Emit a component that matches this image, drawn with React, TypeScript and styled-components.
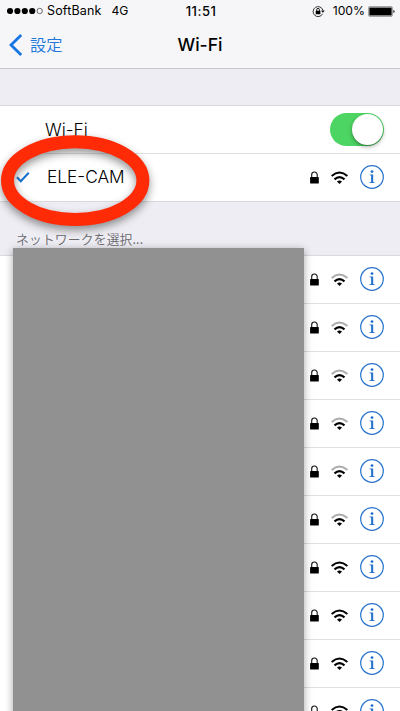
import React from "react";
import styled, { createGlobalStyle } from "styled-components";

const GlobalStyle = createGlobalStyle`
  * { box-sizing: border-box; }
  html, body { margin: 0; background: #efeff4; }
  body { font-family: Inter, "Noto Sans CJK JP", sans-serif; color: #000; overflow: hidden; }
  svg { display: block; }
`;

const Screen = styled.main`
  position: relative;
  width: 400px;
  height: 711px;
  overflow: hidden;
  background: #eeedf3;
`;

const Header = styled.header`
  height: 69px;
  background: #f6f6f8;
  border-bottom: 1px solid #c8c7cc;
`;

const StatusBar = styled.div`
  display: grid;
  grid-template-columns: 1fr auto 1fr;
  align-items: center;
  height: 22px;
  padding: 0 5px 0 7px;
  font-size: 12.2px;
  line-height: 22px;
`;

const StatusSide = styled.div<{ $end?: boolean }>`
  display: flex;
  align-items: center;
  justify-content: ${(p) => (p.$end ? "flex-end" : "flex-start")};
`;

const Carrier = styled.span`
  margin-left: 4px;
  font-size: 12.5px;
  letter-spacing: 0.15px;
`;

const NetworkType = styled.span`
  margin-left: 10px;
`;

const Clock = styled.span`
  font-weight: 500;
  font-size: 13px;
  letter-spacing: 0.5px;
`;

const Percent = styled.span`
  margin: 0 3px 0 8px;
`;

const NavBar = styled.div`
  display: grid;
  grid-template-columns: 1fr auto 1fr;
  align-items: center;
  height: 46px;
  padding: 0 9px;
`;

const BackLink = styled.a`
  display: flex;
  align-items: center;
  gap: 7px;
  color: #2077dc;
  font: 350 16.2px/24px "Noto Sans CJK JP", sans-serif;
`;

const BackText = styled.span`
  margin-top: -2px;
`;

const Title = styled.h1`
  margin: 0;
  font-size: 17.6px;
  font-weight: 500;
  line-height: 24px;
  letter-spacing: 0;
`;

const Group = styled.section`
  margin-top: 36px;
  border-top: 1px solid #d9d9de;
  border-bottom: 1px solid #d9d9de;
`;

const Row = styled.div<{ $inset?: boolean }>`
  display: flex;
  align-items: center;
  height: 47.5px;
  padding: 0 16px;
  background: ${(p) =>
    p.$inset
      ? "linear-gradient(#e0dfe3, #e0dfe3) 45px 100% / 100% 1px no-repeat, #fff"
      : "#fff"};
`;

const CheckSlot = styled.span`
  width: 31px;
`;

const RowLabel = styled.span<{ $indent?: number }>`
  flex: 1;
  margin-left: ${(p) => p.$indent ?? 0}px;
  font-size: 17.3px;
  font-weight: 350;
  line-height: 24px;
`;

const Switch = styled.span`
  display: flex;
  justify-content: flex-end;
  width: 54px;
  height: 33px;
  padding: 1px;
  border-radius: 17px;
  background: #4cd562;
`;

const Knob = styled.span`
  width: 31px;
  height: 31px;
  border-radius: 50%;
  background: #fff;
  box-shadow: 0 2px 4px rgba(0, 0, 0, 0.3), 0 1px 1px rgba(0, 0, 0, 0.2);
`;

const Accessories = styled.span`
  display: grid;
  grid-template-columns: 9px 17px 24px;
  column-gap: 12px;
  align-items: center;
`;

const ListHeading = styled.h2`
  height: 53px;
  margin: 0;
  padding: 27px 16px 0;
  color: #69696e;
  font: 350 12.8px/20px "Noto Sans CJK JP", sans-serif;
  letter-spacing: 0.15px;
`;

const NetworkList = styled.div`
  border-top: 1px solid #d9d9de;
  background: #fff;
`;

const NetworkRow = styled.div`
  display: flex;
  align-items: center;
  justify-content: flex-end;
  height: 47.97px;
  margin-left: 45px;
  padding: 0 16px 0 0;
  border-bottom: 1px solid #e0dfe3;
`;

const Mask = styled.div`
  position: absolute;
  top: 248px;
  left: 13px;
  width: 291px;
  height: 480px;
  background: #919191;
  box-shadow: 0 2px 8px rgba(0, 0, 0, 0.36);
`;

const Highlight = styled.svg`
  position: absolute;
  top: 130px;
  left: -5px;
  filter: drop-shadow(0 4px 4px rgba(0, 0, 0, 0.42));
`;

const SignalDots = () => (
  <svg width="36" height="8" viewBox="0 0 36 8">
    {[3, 10.4, 17.8, 25.2].map((x) => (
      <circle key={x} cx={x} cy="4" r="3.1" />
    ))}
    <circle cx="32.7" cy="4" r="2.7" fill="none" stroke="#333" strokeWidth=".7" />
  </svg>
);

const RotationLock = () => (
  <svg width="13" height="13" viewBox="0 0 13 13">
    <path d="M10.6 8.8A5 5 0 1 1 10.9 5.2" fill="none" stroke="#222" strokeWidth=".9" />
    <path d="M9 5.5h3.7l-1.8 2.3z" />
    <rect x="3.7" y="5.8" width="4.7" height="3.4" rx=".3" />
    <path d="M4.7 6V4.7a1.35 1.35 0 0 1 2.7 0V6" fill="none" stroke="#000" strokeWidth=".9" />
  </svg>
);

const Battery = () => (
  <svg width="27" height="11" viewBox="0 0 27 11">
    <rect x=".5" y=".5" width="24" height="10" rx="1.4" fill="#aaa" stroke="#999" strokeWidth=".8" />
    <rect x="1.5" y="1.7" width="22" height="7.6" rx=".4" />
    <path d="M25.3 4q1.3.2 1.3 1.5T25.3 7z" fill="#222" />
  </svg>
);

const BackArrow = () => (
  <svg width="14" height="22" viewBox="0 0 14 22">
    <path d="M12.2 1L2 11l10.2 10" fill="none" stroke="#1775e3" strokeWidth="2.8" />
  </svg>
);

const Check = () => (
  <svg width="14" height="12" viewBox="0 0 14 12">
    <path d="M1 6.3l3.8 4L12.7 1.7" fill="none" stroke="#1473d2" strokeWidth="2" />
  </svg>
);

const Lock = () => (
  <svg width="9" height="13" viewBox="0 0 9 13">
    <rect x=".1" y="6" width="8.7" height="6.5" rx=".5" />
    <path d="M1.7 6.5V3.8a2.75 2.75 0 0 1 5.5 0v2.7" fill="none" stroke="#111" strokeWidth="1.1" />
  </svg>
);

const WifiIcon = ({ weak }: { weak?: boolean }) => (
  <svg width="17" height="13" viewBox="0 0 17 13">
    <path d="M.6 5Q8.5-1.9 16.4 5" fill="none" stroke={weak ? "#aaa" : "#000"} strokeWidth="2" />
    <path d="M3.5 8.4Q8.5 4 13.5 8.4" fill="none" stroke="#000" strokeWidth="2.1" />
    <path d="M6 10.4Q8.5 8.7 11 10.4L8.5 13z" />
  </svg>
);

const Info = () => (
  <svg width="24" height="24" viewBox="0 0 24 24" fill="#2673cc">
    <circle cx="12" cy="12" r="11.3" fill="none" stroke="#2673cc" strokeWidth="1.2" />
    <circle cx="12" cy="6.6" r="1.45" />
    <path d="M9.6 9.5h3.6v7.6l1.5.3v.7H9.5v-.7l1.6-.3v-6.6l-1.5-.3z" />
  </svg>
);

const NetworkAccessories = ({ weak }: { weak?: boolean }) => (
  <Accessories>
    <Lock />
    <WifiIcon weak={weak} />
    <Info />
  </Accessories>
);

const networks = [true, true, true, true, true, true, false, false, false, false];

export default function App() {
  return (
    <>
      <GlobalStyle />
      <Screen>
        <Header>
          <StatusBar>
            <StatusSide>
              <SignalDots />
              <Carrier>SoftBank</Carrier>
              <NetworkType>4G</NetworkType>
            </StatusSide>
            <Clock>11:51</Clock>
            <StatusSide $end>
              <RotationLock />
              <Percent>100%</Percent>
              <Battery />
            </StatusSide>
          </StatusBar>
          <NavBar>
            <BackLink>
              <BackArrow />
              <BackText>設定</BackText>
            </BackLink>
            <Title>Wi-Fi</Title>
          </NavBar>
        </Header>
        <Group>
          <Row $inset>
            <RowLabel $indent={29}>Wi-Fi</RowLabel>
            <Switch>
              <Knob />
            </Switch>
          </Row>
          <Row>
            <CheckSlot>
              <Check />
            </CheckSlot>
            <RowLabel>ELE-CAM</RowLabel>
            <NetworkAccessories />
          </Row>
        </Group>
        <ListHeading>ネットワークを選択...</ListHeading>
        <NetworkList>
          {networks.map((weak, i) => (
            <NetworkRow key={i}>
              <NetworkAccessories weak={weak} />
            </NetworkRow>
          ))}
        </NetworkList>
        <Mask />
        <Highlight width="165" height="110" viewBox="-5 130 165 110">
          <ellipse cx="75.2" cy="180.6" rx="67.7" ry="38.8" fill="none" stroke="#ff2b06" strokeWidth="13" />
        </Highlight>
      </Screen>
    </>
  );
}
